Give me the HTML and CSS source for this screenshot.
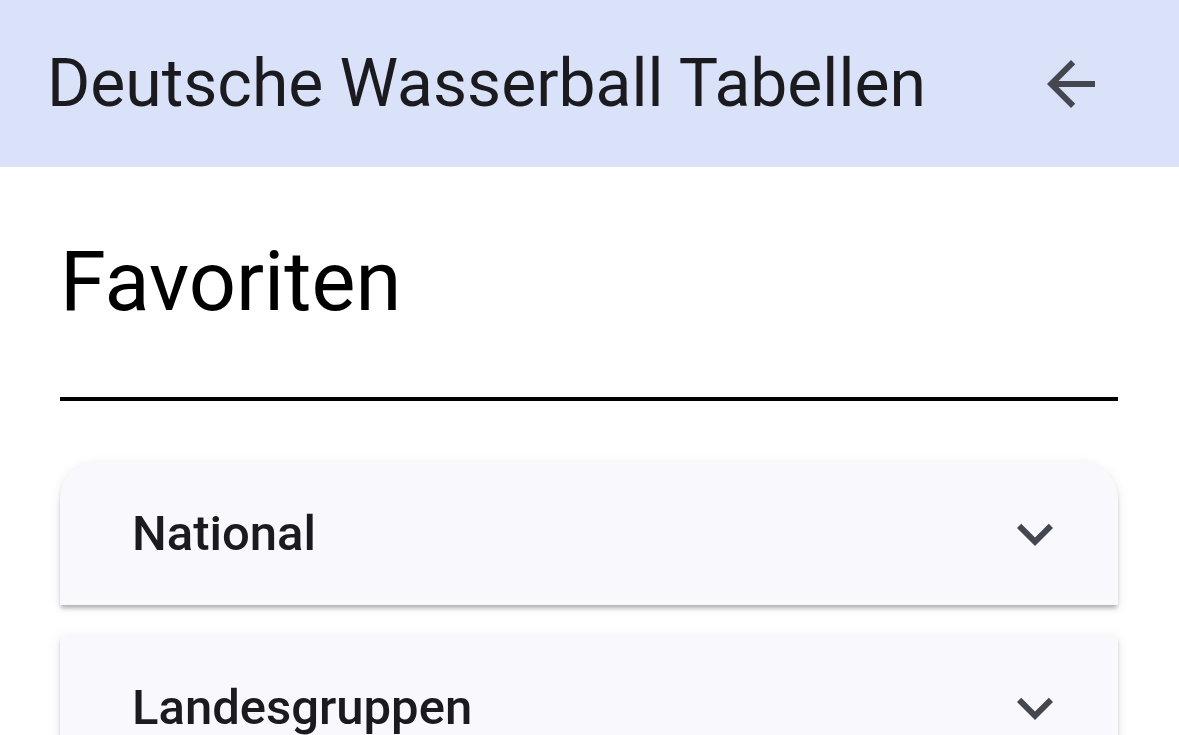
FILE: index.html
```html
<!DOCTYPE html>
<html lang="de">
<head>
<meta charset="utf-8">
<title>Deutsche Wasserball Tabellen</title>
<link rel="stylesheet" href="styles.css">
</head>
<body>
<header class="appbar">
  <h1 class="appbar-title">Deutsche Wasserball Tabellen</h1>
  <button class="icon-btn" aria-label="Zurück">
    <svg viewBox="0 0 24 24" width="72" height="72"><path d="M20 11H7.830l5.59-5.59L12 4l-8 8 8 8 1.41-1.41L7.83 13H20v-2z"/></svg>
  </button>
</header>
<main class="content">
  <h2 class="section-title">Favoriten</h2>
  <hr class="divider">
  <div class="panels">
    <div class="panel panel-first">
      <span class="panel-label">National</span>
      <svg class="chevron" viewBox="0 0 24 24" width="72" height="72"><path d="M16.59 8.59 12 13.17 7.41 8.59 6 10l6 6 6-6z"/></svg>
    </div>
    <div class="panel">
      <span class="panel-label">Landesgruppen</span>
      <svg class="chevron" viewBox="0 0 24 24" width="72" height="72"><path d="M16.59 8.59 12 13.17 7.41 8.59 6 10l6 6 6-6z"/></svg>
    </div>
  </div>
</main>
</body>
</html>
```
FILE: styles.css
```css
html, body {
  margin: 0;
  padding: 0;
  background: #ffffff;
  font-family: Roboto, "Noto Sans", sans-serif;
  overflow: hidden;
}

.appbar {
  height: 167px;
  background: #d9e2f9;
  display: flex;
  align-items: center;
  justify-content: space-between;
  padding: 0 72px 0 47px;
  box-sizing: border-box;
}

.appbar-title {
  margin: 0;
  font-size: 66px;
  font-weight: 400;
  color: #1b1b1f;
  line-height: 1;
  letter-spacing: 0;
}

.icon-btn {
  border: 0;
  background: none;
  padding: 0;
  width: 72px;
  height: 72px;
  display: flex;
}

.icon-btn svg {
  fill: #44474f;
}

.content {
  padding: 0 61px 0 60px;
}

.section-title {
  margin: 73px 0 0 0;
  font-size: 83px;
  font-weight: 400;
  color: #000000;
  line-height: 84px;
  height: 84px;
}

.divider {
  margin: 73px 0 0 0;
  border: 0;
  height: 4px;
  background: #000000;
}

.panels {
  margin-top: 61px;
  display: flex;
  flex-direction: column;
  gap: 31px;
}

.panel {
  height: 143px;
  flex: none;
  background: #f8f8fd;
  display: flex;
  align-items: center;
  justify-content: space-between;
  padding: 0 47px 0 72px;
  box-shadow: 0 4px 4px -1px rgba(0, 0, 0, 0.28), 0 2px 12px 1px rgba(0, 0, 0, 0.07);
}

.panel-first {
  border-radius: 36px 36px 0 0;
}

.panel-label {
  font-size: 49px;
  font-weight: 500;
  color: #1b1b1f;
}

.chevron {
  fill: #44474f;
}
```
